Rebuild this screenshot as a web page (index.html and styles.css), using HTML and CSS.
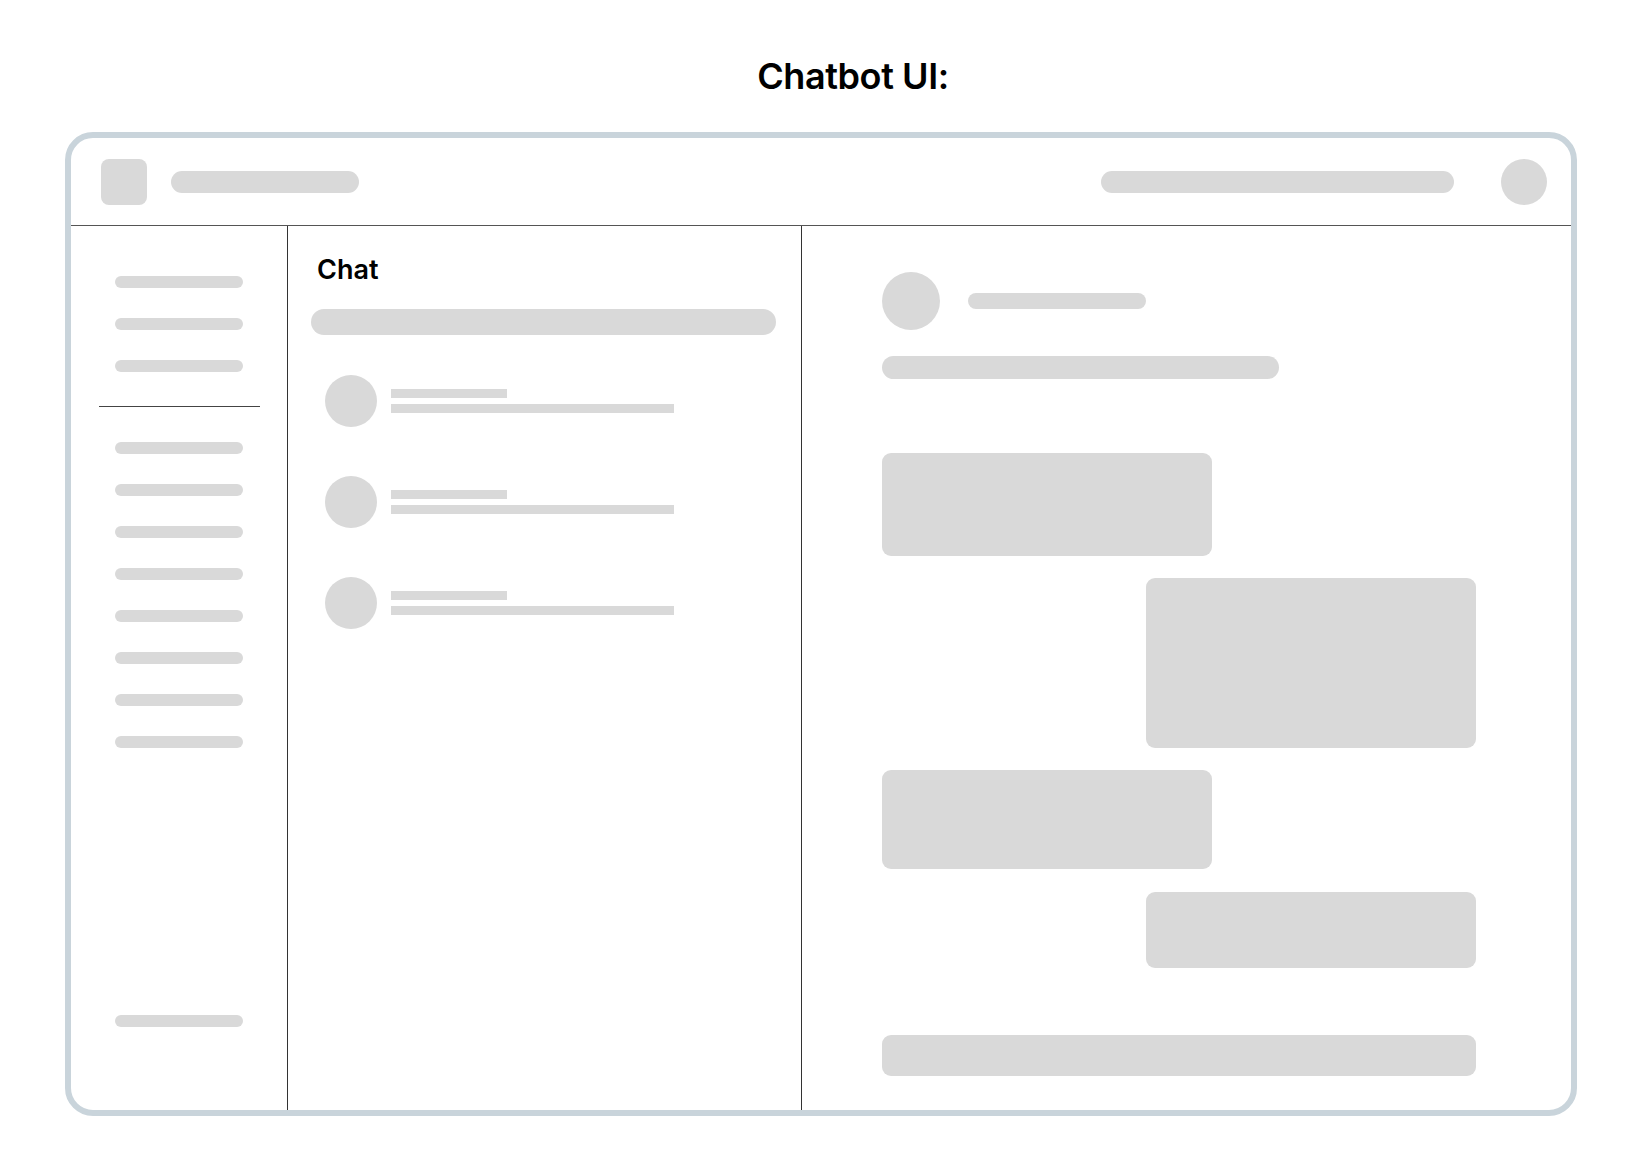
FILE: index.html
```html
<!DOCTYPE html>
<html lang="en">
<head>
<meta charset="utf-8">
<title>Chatbot UI</title>
<link rel="stylesheet" href="styles.css">
</head>
<body>
<h1 class="title">Chatbot UI:</h1>
<div class="frame">
  <header class="topbar">
    <div class="logo"></div>
    <div class="brand-bar"></div>
    <div class="spacer"></div>
    <div class="search-top"></div>
    <div class="avatar-top"></div>
  </header>
  <div class="main">
    <nav class="sidebar">
      <div class="nav-item"></div>
      <div class="nav-item"></div>
      <div class="nav-item"></div>
      <div class="nav-divider"></div>
      <div class="nav-item"></div>
      <div class="nav-item"></div>
      <div class="nav-item"></div>
      <div class="nav-item"></div>
      <div class="nav-item"></div>
      <div class="nav-item"></div>
      <div class="nav-item"></div>
      <div class="nav-item"></div>
      <div class="nav-item nav-bottom"></div>
    </nav>
    <section class="list">
      <h2 class="list-title">Chat</h2>
      <div class="list-search"></div>
      <div class="conv">
        <div class="conv-avatar"></div>
        <div class="conv-text"><div class="line short"></div><div class="line long"></div></div>
      </div>
      <div class="conv">
        <div class="conv-avatar"></div>
        <div class="conv-text"><div class="line short"></div><div class="line long"></div></div>
      </div>
      <div class="conv">
        <div class="conv-avatar"></div>
        <div class="conv-text"><div class="line short"></div><div class="line long"></div></div>
      </div>
    </section>
    <section class="chat">
      <div class="chat-head">
        <div class="chat-avatar"></div>
        <div class="chat-name"></div>
      </div>
      <div class="chat-sub"></div>
      <div class="bubble left b1"></div>
      <div class="bubble right b2"></div>
      <div class="bubble left b3"></div>
      <div class="bubble right b4"></div>
      <div class="composer"></div>
    </section>
  </div>
</div>
</body>
</html>
```
FILE: styles.css
```css
* { box-sizing: border-box; }
html, body { margin: 0; padding: 0; background: #ffffff; }
body {
  font-family: Inter, "Noto Sans", sans-serif;
  color: #000;
  padding-top: 58px;
}
.title {
  margin: 0;
  font-size: 36px;
  line-height: 36px;
  font-weight: 600;
  letter-spacing: -0.4px;
  text-align: center;
  padding-left: 64px;
}
.frame {
  width: 1512px;
  height: 984px;
  margin: 38px auto 0;
  border: 6px solid #c9d4db;
  border-radius: 28px;
  display: flex;
  flex-direction: column;
  overflow: hidden;
}
.topbar {
  height: 88px;
  flex: none;
  display: flex;
  align-items: center;
  padding: 0 24px 0 30px;
  border-bottom: 1px solid #555;
}
.logo { width: 46px; height: 46px; border-radius: 8px; background: #d9d9d9; }
.brand-bar { width: 188px; height: 22px; border-radius: 11px; background: #d9d9d9; margin-left: 24px; }
.spacer { flex: 1; }
.search-top { width: 353px; height: 22px; border-radius: 11px; background: #d9d9d9; }
.avatar-top { width: 46px; height: 46px; border-radius: 50%; background: #d9d9d9; margin-left: 47px; }
.main { flex: 1; display: flex; min-height: 0; }
.sidebar {
  width: 217px;
  flex: none;
  border-right: 1px solid #333;
  display: flex;
  flex-direction: column;
  align-items: center;
  gap: 30px;
  padding: 50px 0 83px;
}
.nav-item { width: 128px; height: 12px; border-radius: 6px; background: #d9d9d9; flex: none; }
.nav-divider { width: 161px; height: 1px; background: #444; margin: 4px 0 5px; flex: none; }
.nav-bottom { margin-top: auto; }
.list {
  width: 514px;
  flex: none;
  border-right: 1px solid #333;
  padding: 30px 25px 0 23px;
}
.list-title {
  margin: 0 0 0 6px;
  font-size: 27px;
  line-height: 27px;
  font-weight: 600;
}
.list-search { height: 26px; border-radius: 13px; background: #d9d9d9; margin-top: 26px; }
.conv { display: flex; align-items: center; padding-left: 14px; margin-top: 49px; }
.list-search + .conv { margin-top: 40px; }
.conv-avatar { width: 52px; height: 52px; border-radius: 50%; background: #d9d9d9; flex: none; }
.conv-text { margin-left: 14px; display: flex; flex-direction: column; gap: 6px; }
.line { height: 9px; background: #d9d9d9; }
.line.short { width: 116px; }
.line.long { width: 283px; }
.chat {
  flex: 1;
  padding: 46px 95px 30px 80px;
  display: flex;
  flex-direction: column;
}
.chat-head { display: flex; align-items: center; }
.chat-avatar { width: 58px; height: 58px; border-radius: 50%; background: #d9d9d9; }
.chat-name { width: 178px; height: 16px; border-radius: 8px; background: #d9d9d9; margin-left: 28px; }
.chat-sub { width: 397px; height: 23px; border-radius: 12px; background: #d9d9d9; margin-top: 26px; }
.bubble { width: 330px; border-radius: 9px; background: #d9d9d9; margin-top: 22px; flex: none; }
.bubble.right { align-self: flex-end; }
.b1 { height: 103px; margin-top: 74px; }
.b2 { height: 170px; }
.b3 { height: 99px; }
.b4 { height: 76px; margin-top: 23px; }
.composer { height: 41px; border-radius: 9px; background: #d9d9d9; margin-top: 67px; flex: none; }
```
